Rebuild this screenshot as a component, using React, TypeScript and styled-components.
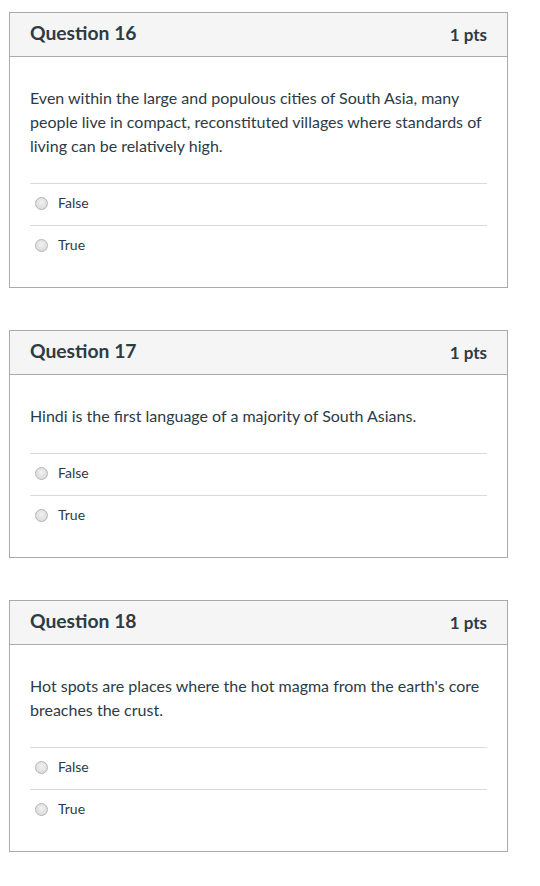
import React from "react"
import styled, { createGlobalStyle } from "styled-components"

const GlobalStyle = createGlobalStyle`
  body {
    margin: 0;
    background: #fff;
    font-family: Lato, "Open Sans", "Liberation Sans", sans-serif;
    color: #2d3b45;
  }
`

const Page = styled.div`
  padding: 12px 32px 20px 9px;
  display: flex;
  flex-direction: column;
  gap: 42px;
`

const Card = styled.div`
  width: 499px;
  box-sizing: border-box;
  border: 1px solid #aaaaaa;
`

const CardHeader = styled.div`
  height: 44px;
  box-sizing: border-box;
  background: #f5f5f5;
  border-bottom: 1px solid #aaaaaa;
  display: flex;
  align-items: center;
  justify-content: space-between;
  padding: 0 20px 0 20px;
`

const Title = styled.div`
  font-size: 19.3px;
  font-weight: 700;
  color: #2d3b45;
  margin-top: -4px;
`

const Points = styled.div`
  font-size: 17px;
  font-weight: 700;
  color: #2d3b45;
  margin-top: 0;
`

const CardBody = styled.div`
  padding: 30px 20px 20px 20px;
`

const QuestionText = styled.div`
  font-size: 16px;
  line-height: 24px;
  color: #2d3b45;
  padding-bottom: 25px;
  margin-top: -1px;
`

const Answer = styled.label`
  display: flex;
  align-items: center;
  height: 42px;
  border-top: 1px solid #dadada;
  box-sizing: border-box;
  padding-left: 5px;
  padding-bottom: 4px;
  font-size: 14px;
  color: #2d3b45;
`

const Radio = styled.span`
  width: 13px;
  height: 13px;
  border-radius: 50%;
  box-sizing: border-box;
  border: 1px solid #b5b5b5;
  background: radial-gradient(circle at 50% 40%, #f0f0f0, #d6d6d6);
  margin-right: 10px;
  margin-top: 1px;
`

type Question = {
  number: number
  text: string
}

const questions: Array<Question> = [
  {
    number: 16,
    text: "Even within the large and populous cities of South Asia, many people live in compact, reconstituted villages where standards of living can be relatively high.",
  },
  {
    number: 17,
    text: "Hindi is the first language of a majority of South Asians.",
  },
  {
    number: 18,
    text: "Hot spots are places where the hot magma from the earth's core breaches the crust.",
  },
]

const QuestionCard: React.FC<{ question: Question }> = ({ question }) => (
  <Card>
    <CardHeader>
      <Title>Question {question.number}</Title>
      <Points>1 pts</Points>
    </CardHeader>
    <CardBody>
      <QuestionText>{question.text}</QuestionText>
      {["False", "True"].map(answer => (
        <Answer key={answer}>
          <Radio />
          {answer}
        </Answer>
      ))}
    </CardBody>
  </Card>
)

const App: React.FC = () => (
  <>
    <GlobalStyle />
    <Page>
      {questions.map(q => (
        <QuestionCard key={q.number} question={q} />
      ))}
    </Page>
  </>
)

export default App
